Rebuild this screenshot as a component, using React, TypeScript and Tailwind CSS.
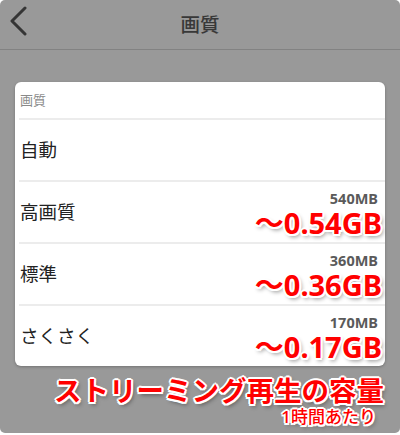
const JP = "font-['Noto_Sans','Noto_Sans_CJK_JP',sans-serif]"

const outline =
  '[text-shadow:-1.5px_-1.5px_0_#fff,1.5px_-1.5px_0_#fff,-1.5px_1.5px_0_#fff,1.5px_1.5px_0_#fff,0_2px_0_#fff,0_-2px_0_#fff,2px_0_0_#fff,-2px_0_0_#fff,2px_3px_4px_rgba(0,0,0,0.45)]'

interface Option {
  label: string
  mb?: string
  gb?: string
}

const options: Option[] = [
  { label: '自動' },
  { label: '高画質', mb: '540MB', gb: '〜0.54GB' },
  { label: '標準', mb: '360MB', gb: '〜0.36GB' },
  { label: 'さくさく', mb: '170MB', gb: '〜0.17GB' },
]

function OptionRow({ option }: { option: Option }) {
  return (
    <div className="ml-1 flex h-[62px] items-center justify-between border-t-2 border-[#ececec] pr-[3px]">
      <span className="pl-px text-[18.5px] leading-none text-[#222]">{option.label}</span>
      {option.mb && (
        <div className="flex flex-col items-end pt-[4px]">
          <span className="pr-[4px] text-[14.5px] font-bold leading-[18px] text-[#5a5a5a]">{option.mb}</span>
          <span className={`text-[29px] font-bold leading-[32px] text-[#ff0000] ${outline}`}>{option.gb}</span>
        </div>
      )}
    </div>
  )
}

export default function App() {
  return (
    <div className={`h-[435px] w-[400px] bg-white ${JP}`}>
      <div className="flex h-[433px] flex-col overflow-hidden rounded-[5px] bg-[#999999]">
        {/* ── header ── */}
        <div className="relative flex h-[50px] shrink-0 items-center justify-center border-b border-[#828282]">
          <svg className="absolute left-[9px] top-[6px]" width="20" height="30" viewBox="0 0 20 30" fill="none">
            <path d="M16 2L3 15l13 13" stroke="#353535" strokeWidth="3" strokeLinecap="round" strokeLinejoin="round" />
          </svg>
          <span className="text-[19.5px] font-medium text-[#383838]">画質</span>
        </div>

        {/* ── card ── */}
        <div className="mx-[15px] mt-[32px] rounded-[6px] bg-white shadow-[0_1px_3px_rgba(0,0,0,0.25)]">
          <div className="flex h-[36px] items-center pl-[5px]">
            <span className="text-[13px] leading-none text-[#8a8a8a]">画質</span>
          </div>
          {options.map(o => (
            <OptionRow key={o.label} option={o} />
          ))}
        </div>

        {/* ── caption ── */}
        <div className="flex flex-col items-end pr-[16px] pt-[9px]">
          <span className={`text-[27.5px] font-bold leading-[32px] text-[#ff0000] ${outline}`}>
            ストリーミング再生の容量
          </span>
          <span className={`pr-[8px] text-[17px] font-medium leading-[20px] text-[#ff0000] ${outline}`}>
            1時間あたり
          </span>
        </div>
      </div>
    </div>
  )
}
